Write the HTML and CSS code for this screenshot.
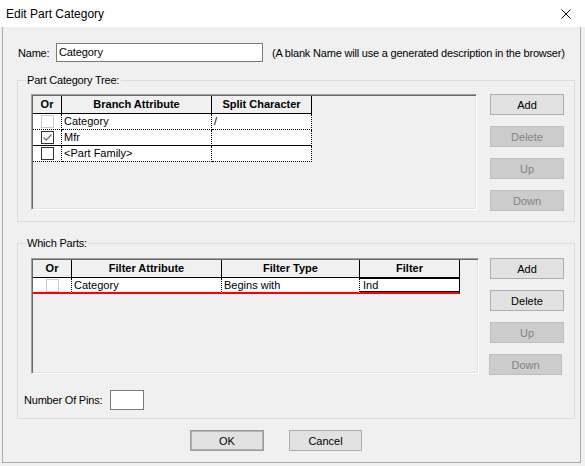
FILE: index.html
```html
<!DOCTYPE html>
<html>
<head>
<meta charset="utf-8">
<title>Edit Part Category</title>
<link rel="stylesheet" href="styles.css">
</head>
<body>
<div class="titlebar">
  <span class="title">Edit Part Category</span>
  <svg class="close" width="10" height="10" viewBox="0 0 10 10"><path d="M0.5 0.5L9.5 9.5M9.5 0.5L0.5 9.5" stroke="#000" stroke-width="1" fill="none"/></svg>
</div>
<div class="frame">
  <div class="name-row">
    <span class="lbl name-lbl">Name:</span>
    <div class="edit name-edit">Category</div>
    <span class="lbl hint">(A blank Name will use a generated description in the browser)</span>
  </div>

  <div class="group g1">
    <span class="legend">Part Category Tree:</span>
    <div class="group-body gb1">
      <div class="grid t1">
        <div class="hdr">
          <div class="hc w-or1">Or</div>
          <div class="hc w-ba">Branch Attribute</div>
          <div class="hc w-sc">Split Character</div>
        </div>
        <div class="row">
          <div class="cell ck w-or1"><span class="cb dis"></span></div>
          <div class="cell w-ba">Category</div>
          <div class="cell w-sc">/</div>
        </div>
        <div class="row cur-above">
          <div class="cell ck w-or1"><span class="cb"><svg width="11" height="11" viewBox="0 0 11 11"><path d="M1.5 5.5L4.2 8.2L9.5 2.5" stroke="#6a6a6a" stroke-width="1.2" fill="none"/></svg></span></div>
          <div class="cell w-ba">Mfr</div>
          <div class="cell w-sc"></div>
        </div>
        <div class="row">
          <div class="cell ck w-or1"><span class="cb"></span></div>
          <div class="cell w-ba">&lt;Part Family&gt;</div>
          <div class="cell w-sc"></div>
        </div>
      </div>
      <div class="btns b1">
        <div class="btn">Add</div>
        <div class="btn dis">Delete</div>
        <div class="btn dis">Up</div>
        <div class="btn dis">Down</div>
      </div>
    </div>
  </div>

  <div class="group g2">
    <span class="legend">Which Parts:</span>
    <div class="group-body gb2">
      <div class="grid t2">
        <div class="hdr">
          <div class="hc w-or2">Or</div>
          <div class="hc w-fa">Filter Attribute</div>
          <div class="hc w-ft">Filter Type</div>
          <div class="hc w-f">Filter</div>
        </div>
        <div class="row red-row">
          <div class="cell ck w-or2"><span class="cb dis"></span></div>
          <div class="cell w-fa">Category</div>
          <div class="cell w-ft">Begins with</div>
          <div class="cell w-f editing">Ind</div>
        </div>
      </div>
      <div class="btns b2">
        <div class="btn">Add</div>
        <div class="btn">Delete</div>
        <div class="btn dis">Up</div>
        <div class="btn dis down2">Down</div>
      </div>
    </div>
    <div class="pins">
      <span class="lbl pins-lbl">Number Of Pins:</span>
      <div class="edit pins-edit"></div>
    </div>
  </div>

  <div class="footer">
    <div class="btn default">OK</div>
    <div class="btn cancel">Cancel</div>
  </div>
</div>
</body>
</html>
```

FILE: styles.css
```css
html, body {
  margin: 0;
  padding: 0;
}
body {
  width: 585px;
  height: 466px;
  overflow: hidden;
  background: #f0f0f0;
  font-family: "Liberation Sans", Arial, sans-serif;
  color: #000;
}

.titlebar {
  height: 27px;
  background: #fff;
  display: flex;
  align-items: center;
  justify-content: space-between;
  padding: 0 14px 0 6px;
  box-sizing: border-box;
}
.title {
  font-size: 12px;
}
.close {
  display: block;
}

.frame {
  margin: 0 4px 0 2px;
  height: 436px;
  box-sizing: border-box;
  border: 1px solid #aaaaaa;
  border-top: none;
  padding-top: 16px;
}

.lbl {
  font-size: 11px;
  letter-spacing: -0.2px;
  white-space: nowrap;
}

.name-row {
  display: flex;
  align-items: center;
  height: 19px;
  padding-left: 15px;
}
.name-lbl {
  width: 38px;
}
.edit {
  height: 19px;
  box-sizing: border-box;
  border: 1px solid #7a7a7a;
  background: #fff;
  font-size: 11px;
  line-height: 17px;
  padding-left: 2px;
  letter-spacing: -0.1px;
}
.name-edit {
  width: 207px;
}
.hint {
  margin-left: 9px;
}

.group {
  position: relative;
  margin-left: 14px;
  width: 558px;
  box-sizing: border-box;
  border: 1px solid #dcdcdc;
}
.legend {
  position: absolute;
  left: 8px;
  top: -7px;
  padding: 0 2px 0 1px;
  background: #f0f0f0;
  font-size: 11px;
  line-height: 13px;
  letter-spacing: -0.2px;
  white-space: nowrap;
}
.g1 {
  margin-top: 18px;
  height: 142px;
  padding-top: 13px;
}
.g2 {
  margin-top: 21px;
  height: 176px;
  padding-top: 14px;
}
.group-body {
  display: flex;
  align-items: flex-start;
  margin-left: 13px;
}

.grid {
  box-sizing: border-box;
  height: 116px;
  border: 1px solid;
  border-color: #a0a0a0 #ffffff #ffffff #a0a0a0;
  box-shadow: inset 1px 1px 0 #696969, inset -1px -1px 0 #e3e3e3;
  padding: 1px;
  background: #f0f0f0;
}
.t1 { width: 446px; }
.t2 { width: 448px; }

.hdr, .row {
  display: flex;
}
.hc {
  box-sizing: border-box;
  height: 18px;
  border-right: 1px solid #000;
  border-bottom: 1px solid #000;
  font-size: 11px;
  font-weight: bold;
  line-height: 17px;
  text-align: center;
  white-space: nowrap;
  overflow: hidden;
}
.cell {
  box-sizing: border-box;
  height: 16px;
  border-right: 1px dotted #000;
  border-bottom: 1px dotted #000;
  background: #fff;
  font-size: 11px;
  line-height: 15px;
  padding-left: 2px;
  white-space: nowrap;
  overflow: hidden;
}
.cell.ck {
  padding-left: 0;
  display: flex;
  align-items: center;
  justify-content: center;
}
.cur-above .cell {
  border-bottom: 1px solid #000;
}
.red-row .cell {
  border-bottom: 2px solid #ff0000;
}
.cell.editing {
  border-right: 1px solid #000;
  box-shadow: inset 0 1px 0 #000, inset 0 -1px 0 #000;
  padding-left: 3px;
}

.w-or1 { width: 29px; }
.w-ba { width: 150px; }
.w-sc { width: 100px; }
.w-or2 { width: 39px; }
.w-fa { width: 150px; }
.w-ft { width: 138px; }
.w-f { width: 100px; }

.cb {
  display: block;
  width: 13px;
  height: 13px;
  box-sizing: border-box;
  border: 1px solid #333333;
  background: #fff;
}
.cb svg {
  display: block;
}
.cb.dis {
  border-color: #cccccc;
}

.btns {
  display: flex;
  flex-direction: column;
  gap: 11px;
}
.b1 { margin-left: 13px; }
.b2 { margin-left: 11px; }
.btn {
  width: 74px;
  height: 21px;
  box-sizing: border-box;
  border: 1px solid #adadad;
  background: #e1e1e1;
  font-size: 11px;
  display: flex;
  align-items: center;
  justify-content: center;
  white-space: nowrap;
}
.btn.dis {
  background: #cccccc;
  border-color: #bfbfbf;
  color: #838383;
}
.down2 {
  width: 73px;
  margin-left: -1px;
}

.pins {
  display: flex;
  align-items: center;
  margin: 15px 0 0 6px;
}
.pins-lbl {
  width: 86px;
}
.pins-edit {
  width: 34px;
  height: 20px;
}

.footer {
  display: flex;
  gap: 25px;
  margin: 11px 0 0 187px;
}
.btn.default {
  border-color: #9a9a9a;
  box-shadow: inset 0 0 0 1px #b4b4b4;
}
.btn.cancel {
  width: 73px;
}
```
